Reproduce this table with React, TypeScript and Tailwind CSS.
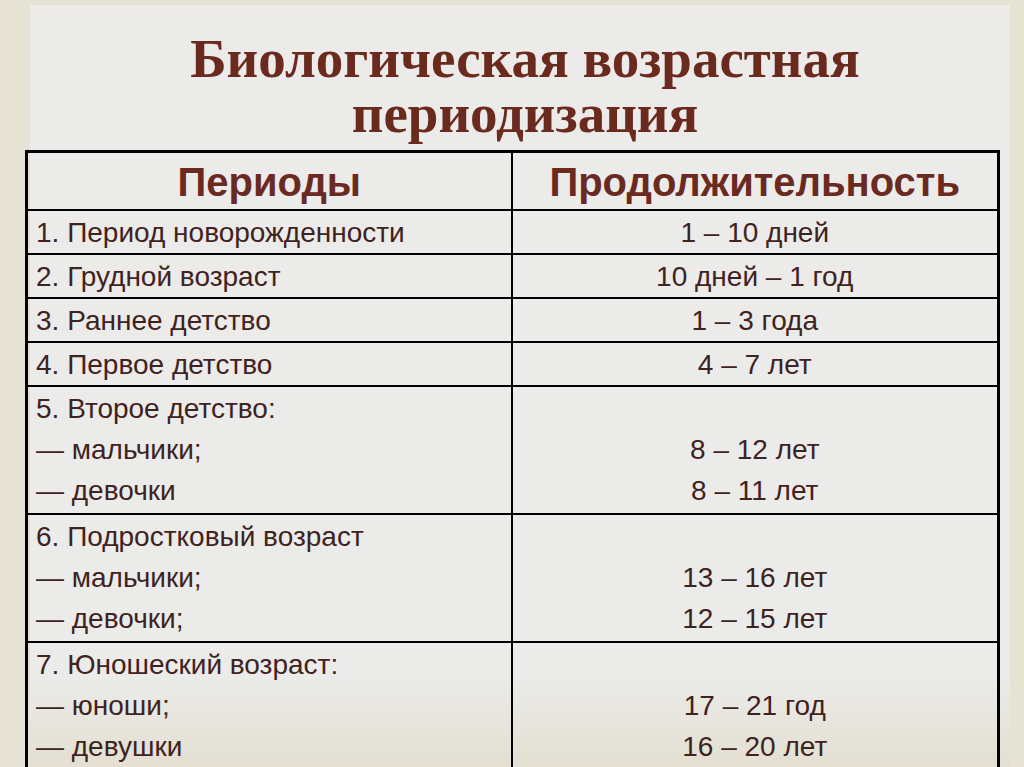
import React from 'react';

type Row = { left: string[]; right: string[] };

const rows: Row[] = [
  { left: ['1. Период новорожденности'], right: ['1 – 10 дней'] },
  { left: ['2. Грудной возраст'], right: ['10 дней – 1 год'] },
  { left: ['3. Раннее детство'], right: ['1 – 3 года'] },
  { left: ['4. Первое детство'], right: ['4 – 7 лет'] },
  { left: ['5. Второе детство:', '— мальчики;', '— девочки'], right: ['', '8 – 12 лет', '8 – 11 лет'] },
  { left: ['6. Подростковый возраст', '— мальчики;', '— девочки;'], right: ['', '13 – 16 лет', '12 – 15 лет'] },
  { left: ['7. Юношеский возраст:', '— юноши;', '— девушки'], right: ['', '17 – 21 год', '16 – 20 лет'] },
];

const Lines: React.FC<{ items: string[] }> = ({ items }) => (
  <>
    {items.map((t, i) => (
      <div key={i} className="h-[41px] whitespace-nowrap">
        {t || '\u00a0'}
      </div>
    ))}
  </>
);

export default function App() {
  return (
    <div className="h-[767px] w-[1024px] overflow-hidden bg-[#e6e3d5] pl-[30px] pr-[14px] pt-[5px]">
      {/* Slide panel */}
      <div className="h-full bg-[linear-gradient(to_bottom,#ecebea_0%,#ebebea_88%,#e3dfd1_100%)]">
        {/* Title */}
        <h1 className="pl-[10px] pt-[26px] text-center font-['Liberation_Serif',serif] text-[55px] font-bold leading-[55px] text-[#6a2a1d]">
          Биологическая возрастная
          <br />
          периодизация
        </h1>

        {/* Table */}
        <table className="-ml-[5px] mt-[9px] w-[975px] table-fixed border-collapse border-[3px] border-black font-['Liberation_Sans',Arial,sans-serif] text-[28px] text-[#3f2320]">
          <colgroup>
            <col className="w-[485px]" />
            <col />
          </colgroup>
          <thead>
            <tr className="h-[58px]">
              <th className="border-2 border-black pt-[2px] text-center align-middle text-[40px] font-bold leading-none text-[#6b2a1f]">
                Периоды
              </th>
              <th className="border-2 border-black pt-[2px] text-center align-middle text-[40px] font-bold leading-none text-[#6b2a1f]">
                Продолжительность
              </th>
            </tr>
          </thead>
          <tbody>
            {rows.map((r, i) => (
              <tr key={i} className={r.left.length > 1 ? 'h-[128px]' : 'h-[44px]'}>
                <td className="border-2 border-black px-[8px] pt-[1px] align-top leading-[41px]">
                  <Lines items={r.left} />
                </td>
                <td className="border-2 border-black px-[8px] pt-[1px] text-center align-top leading-[41px]">
                  <Lines items={r.right} />
                </td>
              </tr>
            ))}
          </tbody>
        </table>
      </div>
    </div>
  );
}
